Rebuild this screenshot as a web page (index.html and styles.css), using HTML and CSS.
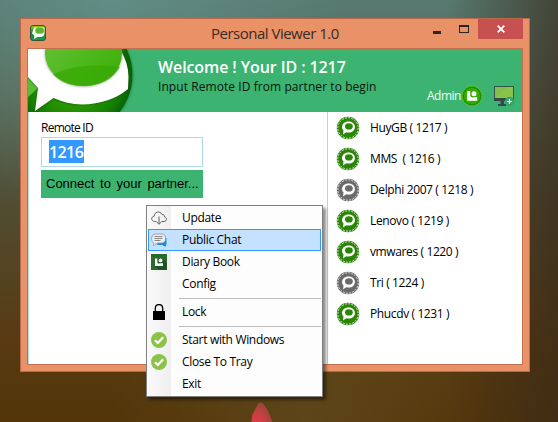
FILE: index.html
```html
<!DOCTYPE html>
<html lang="en">
<head>
<meta charset="utf-8">
<title>Personal Viewer 1.0</title>
<link rel="stylesheet" href="styles.css">
</head>
<body>
<svg width="0" height="0" class="defs">
  <symbol id="peer" viewBox="0 0 24 24">
    <circle cx="12" cy="12" r="11.2" fill="currentColor"/>
    <circle cx="12" cy="12" r="10.2" fill="none" stroke="#fff" stroke-width=".8" stroke-dasharray="2 1.2"/>
    <path d="M12.500 5.400c4 0 6.400 2.400 6.400 5.500s-2.600 5.600-6.400 5.600c-.8 0-1.500-.1-2.200-.3L7 18.600l.5-4.200C6.500 13.400 6 12.300 6 11c0-3.200 2.700-5.600 6.500-5.600z" fill="#fff"/>
    <ellipse cx="12.900" cy="10.400" rx="3.900" ry="3.100" fill="currentColor"/>
  </symbol>
  <symbol id="check" viewBox="0 0 16 16">
    <circle cx="8" cy="8" r="8" fill="#8bc34a"/>
    <path d="M4 8.200l2.800 2.800L12.200 5.300" fill="none" stroke="#fff" stroke-width="2.200"/>
  </symbol>
</svg>
<div class="desktop">
  <div class="petal"></div>
  <main class="window">
    <header class="titlebar">
      <svg class="app-icon" viewBox="0 0 16 16">
        <defs><linearGradient id="ai" x2="0" y2="1"><stop stop-color="#9bd014"/><stop offset=".5" stop-color="#168536"/><stop offset="1" stop-color="#15a04c"/></linearGradient></defs>
        <rect x=".5" y=".5" width="15" height="15" rx="2.500" fill="url(#ai)" stroke="#35543b"/>
        <path d="M4 2.500h10.500v6c0 2.500-2 3.500-4.500 3.500H7.500L4 14l.4-3.500L2 8.500C2.500 7.500 3 5 4 2.500z" fill="#fff"/>
        <rect x="5.300" y="2.500" width="8.700" height="6.300" rx="3" fill="#63b333"/>
      </svg>
      <h1 class="title">Personal Viewer 1.0</h1>
      <div class="controls">
        <span class="min"></span><span class="max"></span>
        <span class="close"><svg width="8" height="8" viewBox="0 0 8 8"><path d="M.7.7l6.600 6.600M7.300.7L.7 7.300" stroke="#fff" stroke-width="1.800"/></svg></span>
      </div>
    </header>
    <section class="client">
      <div class="banner">
        <svg class="logo" width="108" height="63" viewBox="0 0 108 63">
          <defs>
            <radialGradient id="ball" gradientUnits="userSpaceOnUse" cx="45" cy="26" r="61"><stop offset=".45" stop-color="#2c9a05"/><stop offset=".8" stop-color="#168000"/><stop offset="1" stop-color="#056009"/></radialGradient>
            <linearGradient id="face" x2="1" y2=".7"><stop stop-color="#68c43b"/><stop offset="1" stop-color="#3fb00b"/></linearGradient>
            <filter id="soft"><feGaussianBlur stdDeviation="1"/></filter>
          </defs>
          <circle cx="45.500" cy="26.500" r="60" fill="#174f20" opacity=".35" filter="url(#soft)"/>
          <circle cx="44.500" cy="26" r="60" fill="url(#ball)"/>
          <path d="M0 28v20L10 39z" fill="#59bd38"/>
          <path d="M0 0h94q7 14 7 28v12q-16 14-46 16-16 0-30-6L7 63l3-24L0 29z" fill="#063b05" opacity=".5" filter="url(#soft)"/>
          <path d="M0 0h92q8.500 14 8.500 28l-.5 12Q82 55 54 55.500 39 55 25.500 49L7 62l3-23L0 28z" fill="#fff"/>
          <ellipse cx="55.500" cy="5" rx="39" ry="33" fill="#8b9788" opacity=".7" filter="url(#soft)"/>
          <ellipse cx="55.500" cy="4.500" rx="38.500" ry="32.500" fill="url(#face)"/>
          <path d="M25 25Q53 13 92 18 81 37 55.500 37 35 37 25 25z" fill="#38aa04" opacity=".75"/>
        </svg>
        <div class="greeting">
          <h2 class="welcome">Welcome ! Your ID : 1217</h2>
          <p class="hint">Input Remote ID from partner to begin</p>
        </div>
        <div class="account">
          <span class="admin">Admin</span>
          <svg class="badge" width="22" height="22" viewBox="0 0 22 22">
            <circle cx="11" cy="11" r="10" fill="#24a300" stroke="#73ca16" stroke-width="1" stroke-dasharray="1.500 1"/>
            <circle cx="11" cy="11" r="8.600" fill="#37ad00" stroke="#168c07"/>
            <path d="M6.200 6h3v5q1 2 3.600 1.200h3.400v3.500H6.200z" fill="#fff"/><circle cx="13" cy="8.800" r="2.500" fill="#fff"/>
          </svg>
          <svg class="monitor" width="22" height="22" viewBox="0 0 22 22">
            <rect x="1.500" y="1.500" width="19" height="13" fill="#83bd4f" stroke="#38534f"/>
            <path d="M2 12L15 2h5v12H2z" fill="#8bc34a"/>
            <path d="M1 13h13v3h-3v3h2v2H5v-2h2.500v-3H1z" fill="#34484a"/>
            <circle cx="16.500" cy="16.500" r="4.700" fill="#35a56b"/>
            <path d="M16.500 14v5M14 16.500h5" stroke="#fff" stroke-width="1.200"/>
          </svg>
        </div>
      </div>
      <div class="body">
        <form class="connect">
          <label class="label">Remote ID</label>
          <div class="field"><span class="selected">1216</span></div>
          <div class="button">Connect to your partner...</div>
        </form>
        <ul class="peers">
          <li class="peer"><svg class="on"><use href="#peer"/></svg><span>HuyGB ( 1217 )</span></li>
          <li class="peer"><svg class="on"><use href="#peer"/></svg><span>MMS&nbsp; ( 1216 )</span></li>
          <li class="peer"><svg class="off"><use href="#peer"/></svg><span>Delphi 2007 ( 1218 )</span></li>
          <li class="peer"><svg class="on"><use href="#peer"/></svg><span>Lenovo ( 1219 )</span></li>
          <li class="peer"><svg class="on"><use href="#peer"/></svg><span>vmwares ( 1220 )</span></li>
          <li class="peer"><svg class="off"><use href="#peer"/></svg><span>Tri ( 1224 )</span></li>
          <li class="peer"><svg class="on"><use href="#peer"/></svg><span>Phucdv ( 1231 )</span></li>
        </ul>
      </div>
    </section>
  </main>
  <nav class="menu">
    <div class="item"><svg class="ico" viewBox="0 0 16 16"><path d="M5.500 11.500h-2C-.3 11-.1 6.600 3.200 6.200 3.300 1.800 9 .3 11 4.500c2.200-.2 2.700 1.500 2.500 2.500 3 .5 2.300 4.500-.5 4.500h-2.500M8 6.500V14M5.800 12L8 14.300l2.200-2.300" fill="none" stroke="#606060"/></svg>Update</div>
    <div class="item active"><svg class="ico" viewBox="0 0 16 16"><path d="M8 6h7.500v6l-1 2.700L11 13H6z" fill="#168ee0"/><path d="M4 2h7q3.500 0 3.500 4.500T10.500 11H6.500L2.500 13.500 3 11Q.5 10.500.5 6.500T4 2z" fill="#eceff2" stroke="#8b969f" stroke-width=".8"/><path d="M3.500 4.500h8M3.500 6.500h8M3.500 8.500h6" stroke="#888"/></svg>Public Chat</div>
    <div class="item"><svg class="ico" viewBox="0 0 16 16"><path d="M0 0h16v16H0z" fill="#286b2c"/><path d="M12 5l4 4v7H8l-4-4z" fill="#1b5321"/><path d="M4 4.500h2.300v4q.8 1.500 2.500.7H12V12H4z" fill="#fff"/><circle cx="9.600" cy="6.400" r="1.900" fill="#fff"/></svg>Diary Book</div>
    <div class="item"><span class="ico"></span>Config</div>
    <div class="sep"></div>
    <div class="item"><svg class="ico" viewBox="0 0 16 16"><path d="M4.300 8V4.500q0-4 3.700-4t3.700 4V8" fill="none" stroke="#000" stroke-width="1.300"/><path d="M2 7h12v9H2z"/></svg>Lock</div>
    <div class="sep"></div>
    <div class="item"><svg class="ico"><use href="#check"/></svg>Start with Windows</div>
    <div class="item"><svg class="ico"><use href="#check"/></svg>Close To Tray</div>
    <div class="item"><span class="ico"></span>Exit</div>
  </nav>
</div>
</body>
</html>
```
FILE: styles.css
```css
* { box-sizing: border-box; margin: 0; padding: 0; }
body { overflow: hidden; }
.defs { position: absolute; }
.desktop {
  position: relative; width: 558px; height: 422px; padding: 18px 0 0 20px; overflow: hidden;
  background:
    radial-gradient(circle at 20% 0, rgba(105,160,154,.5), transparent 38%),
    linear-gradient(90deg, transparent 80%, rgba(55,40,25,.65)),
    radial-gradient(ellipse at 55% 100%, rgba(100,80,35,.6), transparent 45%),
    linear-gradient(180deg, #577a70 0, #586b5c 18%, #504e35 45%, #573b12 80%, #533509 100%);
}
.petal {
  position: absolute; left: 249px; top: 402px; width: 24px; height: 36px;
  background: radial-gradient(ellipse at 35% 75%, #dc3c48 25%, #a44438 65%, #8d6a5c);
  clip-path: polygon(42% 0, 58% 4%, 80% 25%, 100% 60%, 100% 100%, 0 100%, 14% 35%);
  filter: blur(1.2px);
}
.window {
  width: 510px; height: 354px; padding: 0 6px 6px;
  border: 1px solid #b9694c; background: #e99167;
  display: flex; flex-direction: column;
  font-family: "Open Sans", sans-serif;
}
.titlebar { height: 29px; display: grid; grid-template-columns: 150px 1fr 89px; align-items: start; }
.app-icon { width: 16px; height: 16px; margin: 6px 0 0 3px; }
.title { font: 400 15px/28px "Open Sans", sans-serif; color: #3b2b25; white-space: nowrap; letter-spacing: -.5px; padding-left: 34px; }
.controls { display: flex; }
.min { width: 8px; height: 3px; background: #2d2523; margin: 12px 0 0 -1px; }
.max { width: 10px; height: 8px; border: 1px solid #2d2523; border-top-width: 2px; margin: 6px 8px 0 18px; }
.close { width: 45px; height: 20px; margin-left: 1px; background: #c75050; display: flex; align-items: center; justify-content: center; }
.client { flex: 1; border: 1px solid #c4704e; background: #fff; display: flex; flex-direction: column; }
.banner { height: 63px; background: #3cb371; display: flex; }
.logo { flex: none; }
.greeting { flex: none; padding: 8px 0 0 22px; width: 291px; white-space: nowrap; }
.welcome { font: 600 16px/21px "Open Sans", sans-serif; color: #fff; letter-spacing: -.1px; }
.hint { font: 500 12px/18px "Open Sans", sans-serif; color: #07130c; letter-spacing: .07px; }
.account { display: flex; align-items: center; height: 22px; margin-top: 36px; }
.admin { width: 34px; font-size: 12px; line-height: 20px; color: #eafff0; letter-spacing: -.5px; }
.badge { flex: none; }
.monitor { flex: none; margin-left: 10px; }
.body { flex: 1; display: flex; border-left: 1px solid #add8e6; }
.connect { width: 298px; padding: 6px 0 0 12px; }
.label { display: block; font: 12px/19px "Open Sans", sans-serif; color: #000; letter-spacing: -.75px; }
.field { width: 162px; height: 30px; border: 1px solid #add8e6; padding: 2px 7px; }
.selected { display: block; width: 35px; height: 23px; background: #3399ff; color: #fff; font: 600 16px/24px "Open Sans", sans-serif; letter-spacing: -.6px; }
.button { width: 162px; height: 28px; margin-top: 3px; padding-left: 5px; background: #3cb371; color: #000; font: 13px/27px "Liberation Sans", Arial, sans-serif; white-space: nowrap; word-spacing: 2px; }
.peers { flex: 1; list-style: none; border-left: 1px solid #add8e6; }
.peer { height: 31px; display: flex; align-items: center; padding-left: 8px; font-size: 12px; letter-spacing: -.38px; color: #000; white-space: nowrap; }
.peer svg { width: 24px; height: 24px; margin-right: 10px; }
.on { color: #2b8506; }
.off { color: #6a6a6a; }
.menu {
  position: absolute; left: 146px; top: 205px; width: 177px; height: 192px; padding: 1px;
  border: 1px solid #808080; box-shadow: 3px 3px 3px rgba(0,0,0,.45);
  background: linear-gradient(90deg, #fcfcfc 0 1px, #f9f9f9 1px, #efefef 24px, #fdfdfd 24px);
  font: 12px/20px "Open Sans", sans-serif; color: #000; letter-spacing: -.32px;
}
.item { height: 22px; display: flex; align-items: center; padding-left: 3px; white-space: nowrap; }
.active { padding-left: 2px; border: 1px solid #3399ff; background: #c4e1ff; }
.ico { width: 16px; height: 16px; margin-right: 15px; flex: none; }
.sep { height: 6px; margin-left: 31px; background: linear-gradient(transparent 3px, #bdbdbd 3px 4px, transparent 4px); }
```
